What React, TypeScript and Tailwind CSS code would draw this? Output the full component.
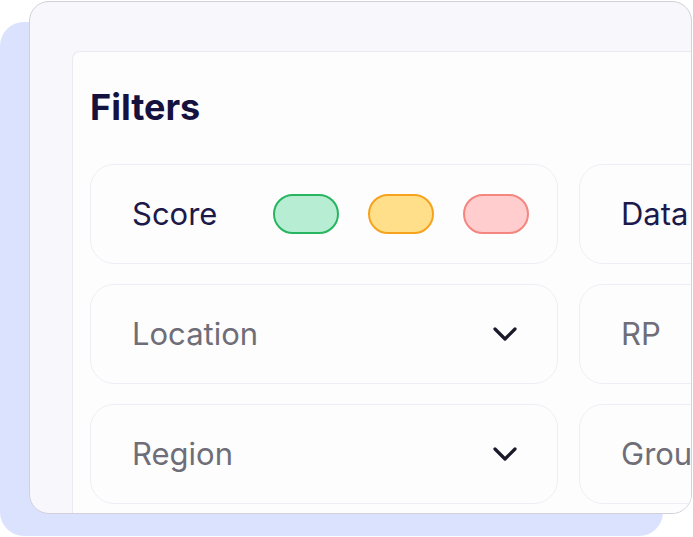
import { ReactNode } from 'react';

function Chevron() {
  return (
    <svg width="26" height="16" viewBox="0 0 26 16" fill="none" className="shrink-0">
      <path d="M3 3 L13 13 L23 3" stroke="#1b1a2b" strokeWidth="3.2" strokeLinecap="round" strokeLinejoin="round" />
    </svg>
  );
}

function FilterCard({ children }: { children: ReactNode }) {
  return (
    <div className="flex h-[100px] items-center rounded-[24px] border border-[#efeef4] bg-[#fdfdfe] pl-[41px] pr-[39px]">
      {children}
    </div>
  );
}

function Select({ label }: { label: string }) {
  return (
    <FilterCard>
      <span className="text-[31px] text-[#6f6e78]">{label}</span>
      <div className="ml-auto">
        <Chevron />
      </div>
    </FilterCard>
  );
}

const pills = [
  'bg-[#b7edd2] border-[#27b560]',
  'bg-[#ffdf89] border-[#f7a21c]',
  'bg-[#ffcdcd] border-[#f4857f]',
];

export default function App() {
  return (
    <div className="relative h-[537px] w-[693px] overflow-hidden bg-white" style={{ fontFamily: 'Inter, "Noto Sans", sans-serif' }}>
      {/* backdrop */}
      <div className="absolute left-0 top-[22px] h-[514px] w-[663px] rounded-[24px] bg-[#dbe2fe]" />

      <div className="relative ml-[29px] mt-[1px] h-[513px] w-[663px] overflow-hidden rounded-[20px] border border-[#d2d1db] bg-[#f8f7fb] pl-[42px] pt-[49px]">
        <div className="h-[600px] w-[1100px] rounded-tl-[8px] border-l border-t border-[#eaeaf0] bg-[#fdfdfe] pl-[17px] pt-[37px]">
          <h1 className="mb-[39px] text-[36px] font-bold leading-none text-[#15123f]">Filters</h1>

          <div className="grid grid-cols-[468px_468px] gap-x-[21px] gap-y-[20px]">
            <FilterCard>
              <span className="text-[31px] text-[#1c1a4a]">Score</span>
              <div className="ml-[56px] flex gap-[29px]">
                {pills.map((p) => (
                  <div key={p} className={`h-[40px] w-[66px] rounded-full border-2 ${p}`} />
                ))}
              </div>
            </FilterCard>
            <FilterCard>
              <span className="text-[31px] text-[#1c1a4a]">Data</span>
            </FilterCard>

            <Select label="Location" />
            <FilterCard>
              <span className="text-[31px] text-[#6f6e78]">RP</span>
            </FilterCard>

            <Select label="Region" />
            <FilterCard>
              <span className="text-[31px] text-[#6f6e78]">Group</span>
            </FilterCard>
          </div>
        </div>
      </div>
    </div>
  );
}
